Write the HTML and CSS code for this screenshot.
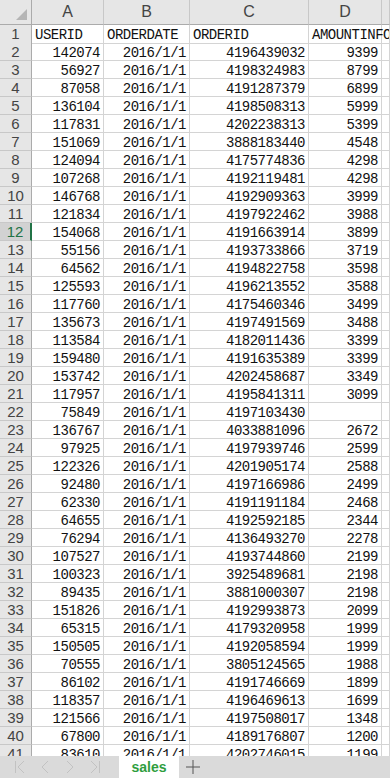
FILE: index.html
```html
<!DOCTYPE html>
<html>
<head>
    <meta charset="UTF-8" />
    <title>sales</title>
    <link rel="stylesheet" href="styles.css">
</head>
<body>
    <div class="sheet" id="sheet">
        <div class="row head">
            <div class="corner"><span class="tri"></span></div>
            <div class="col">A</div>
            <div class="col">B</div>
            <div class="col">C</div>
            <div class="col">D</div>
            <div class="col"></div>
        </div>
        <div class="row">
            <div class="num">1</div>
            <div class="cell txt">USERID</div>
            <div class="cell txt">ORDERDATE</div>
            <div class="cell txt">ORDERID</div>
            <div class="cell txt">AMOUNTINFO</div>
            <div class="cell"></div>
        </div>
    </div>
    <div class="tabbar">
        <div class="nav">
            <svg width="12" height="14" viewBox="0 0 12 14"><path d="M1.5 1v12M10 1L4 7l6 6" /></svg>
            <svg width="12" height="14" viewBox="0 0 12 14"><path d="M9 1L3 7l6 6" /></svg>
            <svg width="12" height="14" viewBox="0 0 12 14"><path d="M3 1l6 6-6 6" /></svg>
            <svg width="12" height="14" viewBox="0 0 12 14"><path d="M2 1l6 6-6 6M10.5 1v12" /></svg>
        </div>
        <div class="tab">sales</div>
        <div class="add">
            <svg width="14" height="14" viewBox="0 0 14 14"><path d="M7 0v14M0 7h14" /></svg>
        </div>
    </div>
    <script>
        var data = [
            [142074, 4196439032, 9399],
            [56927, 4198324983, 8799],
            [87058, 4191287379, 6899],
            [136104, 4198508313, 5999],
            [117831, 4202238313, 5399],
            [151069, 3888183440, 4548],
            [124094, 4175774836, 4298],
            [107268, 4192119481, 4298],
            [146768, 4192909363, 3999],
            [121834, 4197922462, 3988],
            [154068, 4191663914, 3899],
            [55156, 4193733866, 3719],
            [64562, 4194822758, 3598],
            [125593, 4196213552, 3588],
            [117760, 4175460346, 3499],
            [135673, 4197491569, 3488],
            [113584, 4182011436, 3399],
            [159480, 4191635389, 3399],
            [153742, 4202458687, 3349],
            [117957, 4195841311, 3099],
            [75849, 4197103430, ""],
            [136767, 4033881096, 2672],
            [97925, 4197939746, 2599],
            [122326, 4201905174, 2588],
            [92480, 4197166986, 2499],
            [62330, 4191191184, 2468],
            [64655, 4192592185, 2344],
            [76294, 4136493270, 2278],
            [107527, 4193744860, 2199],
            [100323, 3925489681, 2198],
            [89435, 3881000307, 2198],
            [151826, 4192993873, 2099],
            [65315, 4179320958, 1999],
            [150505, 4192058594, 1999],
            [70555, 3805124565, 1988],
            [86102, 4191746669, 1899],
            [118357, 4196469613, 1699],
            [121566, 4197508017, 1348],
            [67800, 4189176807, 1200],
            [83610, 4202746015, 1199]
        ];

        var sheet = document.getElementById("sheet");
        data.forEach(function(r, i) {
            var n = i + 2;
            var row = document.createElement("div");
            row.className = "row";
            row.innerHTML =
                '<div class="num' + (n === 12 ? ' active' : '') + '">' + n + '</div>' +
                '<div class="cell">' + r[0] + '</div>' +
                '<div class="cell">2016/1/1</div>' +
                '<div class="cell">' + r[1] + '</div>' +
                '<div class="cell">' + r[2] + '</div>' +
                '<div class="cell"></div>';
            sheet.appendChild(row);
        });
    </script>
</body>
</html>
```

FILE: styles.css
```css
body {
    margin: 0;
    background-color: white;
}

.sheet {
    height: 756px;
    overflow: hidden;
}

.row {
    display: grid;
    grid-template-columns: 32px 72px 86px 119px 73px 1fr;
    height: 18px;
}

.row.head {
    height: 25px;
}

.row > div {
    box-sizing: border-box;
    overflow: hidden;
    white-space: nowrap;
}

.corner {
    position: relative;
    background-color: #e6e6e6;
    border-right: 1px solid #ababab;
    border-bottom: 1px solid #ababab;
}

.tri {
    position: absolute;
    right: 4px;
    bottom: 4px;
    width: 0;
    height: 0;
    border-left: 11px solid transparent;
    border-bottom: 11px solid #b5b5b5;
}

.col {
    background-color: #e6e6e6;
    border-right: 1px solid #c8c8c8;
    border-bottom: 1px solid #ababab;
    color: #444;
    font-family: "Liberation Sans", Arial, sans-serif;
    font-size: 16px;
    line-height: 24px;
    text-align: center;
}

.num {
    background-color: #e6e6e6;
    border-right: 1px solid #ababab;
    border-bottom: 1px solid #c8c8c8;
    color: #444;
    font-family: "Liberation Sans", Arial, sans-serif;
    font-size: 15px;
    line-height: 18px;
    text-align: center;
}

.num.active {
    background-color: #d2d2d2;
    color: #217346;
    border-right: 2px solid #217346;
}

.cell {
    border-right: 1px solid #d4d4d4;
    border-bottom: 1px solid #d4d4d4;
    padding: 2px 3px 0 0;
    font-family: "Liberation Mono", "Courier New", monospace;
    font-size: 14px;
    letter-spacing: -0.5px;
    line-height: 16px;
    color: #111;
    text-align: right;
}

.cell.txt {
    text-align: left;
    padding-left: 3px;
    padding-right: 0;
}

.row > .cell.txt:nth-child(5) {
    overflow: visible;
}

.tabbar {
    height: 22px;
    display: flex;
    align-items: stretch;
    background-color: #dadada;
}

.nav {
    width: 119px;
    display: flex;
    align-items: center;
    gap: 13px;
    padding-left: 14px;
    box-sizing: border-box;
}

.nav svg path {
    fill: none;
    stroke: #c2c2c2;
    stroke-width: 1;
}

.tab {
    width: 60px;
    background-color: white;
    color: #2f9e3e;
    font-family: "Liberation Sans", Arial, sans-serif;
    font-weight: bold;
    font-size: 14px;
    display: flex;
    align-items: center;
    justify-content: center;
}

.add {
    width: 28px;
    display: flex;
    align-items: center;
    justify-content: center;
}

.add svg path {
    fill: none;
    stroke: #555;
    stroke-width: 1;
}
```
